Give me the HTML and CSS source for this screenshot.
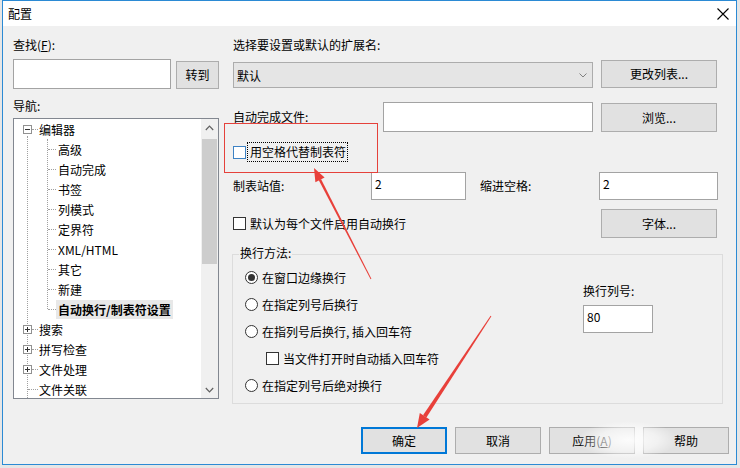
FILE: index.html
```html
<!DOCTYPE html>
<html lang="zh-CN">
<head>
<meta charset="utf-8">
<title>配置</title>
<link rel="stylesheet" href="styles.css">
</head>
<body>
<div class="window">
  <div class="titlebar">
    <span class="title">配置</span>
    <svg class="close" width="12" height="12" viewBox="0 0 12 12"><path d="M0.5 0.5 L11.5 11.5 M11.5 0.5 L0.5 11.5" stroke="#000" stroke-width="1.1" fill="none"/></svg>
  </div>
  <div class="main">
    <div class="left">
      <div class="label lbl-find">查找(<u>F</u>):</div>
      <div class="find-row">
        <div class="input find-input"></div>
        <div class="btn btn-go">转到</div>
      </div>
      <div class="label lbl-nav">导航:</div>
      <div class="tree">
        <div class="tree-list">
          <div class="tree-row root"><span class="tg minus"></span><span class="dash"></span><span class="txt">编辑器</span></div>
          <div class="children">
            <div class="tree-row leaf"><span class="txt">高级</span></div>
            <div class="tree-row leaf"><span class="txt">自动完成</span></div>
            <div class="tree-row leaf"><span class="txt">书签</span></div>
            <div class="tree-row leaf"><span class="txt">列模式</span></div>
            <div class="tree-row leaf"><span class="txt">定界符</span></div>
            <div class="tree-row leaf"><span class="txt">XML/HTML</span></div>
            <div class="tree-row leaf"><span class="txt">其它</span></div>
            <div class="tree-row leaf"><span class="txt">新建</span></div>
            <div class="tree-row leaf sel"><span class="txt">自动换行/制表符设置</span></div>
          </div>
          <div class="tree-row root"><span class="tg plus"></span><span class="dash"></span><span class="txt">搜索</span></div>
          <div class="tree-row root"><span class="tg plus"></span><span class="dash"></span><span class="txt">拼写检查</span></div>
          <div class="tree-row root"><span class="tg plus"></span><span class="dash"></span><span class="txt">文件处理</span></div>
          <div class="tree-row root noexp"><span class="dash long"></span><span class="txt">文件关联</span></div>
        </div>
        <div class="scrollbar">
          <div class="sb-btn"><svg width="9" height="6" viewBox="0 0 9 6"><polyline points="0.8,5 4.5,1.2 8.2,5" fill="none" stroke="#606060" stroke-width="1.2"/></svg></div>
          <div class="sb-track"><div class="sb-thumb"></div></div>
          <div class="sb-btn"><svg width="9" height="6" viewBox="0 0 9 6"><polyline points="0.8,1 4.5,4.8 8.2,1" fill="none" stroke="#606060" stroke-width="1.2"/></svg></div>
        </div>
      </div>
    </div>

    <div class="right">
      <div class="label lbl-ext">选择要设置或默认的扩展名:</div>
      <div class="row-ext">
        <div class="select"><span>默认</span><svg width="8" height="5" viewBox="0 0 8 5"><polyline points="0.5,0.5 4,4 7.5,0.5" fill="none" stroke="#808080" stroke-width="1"/></svg></div>
        <div class="btn btn-wide">更改列表...</div>
      </div>
      <div class="row-auto">
        <div class="label">自动完成文件:</div>
        <div class="input auto-input"></div>
        <div class="btn btn-browse">浏览...</div>
      </div>
      <div class="row-tabcb">
        <span class="cb cb-focus"></span>
        <span class="focus-label">用空格代替制表符</span>
      </div>
      <div class="row-tabs">
        <div class="label">制表站值:</div>
        <div class="input num-input">2</div>
        <div></div>
        <div class="label">缩进空格:</div>
        <div class="input num-input">2</div>
      </div>
      <div class="row-wrapcb">
        <div class="cb-line"><span class="cb"></span><span class="cb-text">默认为每个文件启用自动换行</span></div>
        <div class="btn btn-font">字体...</div>
      </div>
      <div class="group">
        <span class="legend">换行方法:</span>
        <div class="radios">
          <div class="opt"><span class="radio checked"></span><span>在窗口边缘换行</span></div>
          <div class="opt"><span class="radio"></span><span>在指定列号后换行</span></div>
          <div class="opt"><span class="radio"></span><span>在指列号后换行, 插入回车符</span></div>
          <div class="opt sub"><span class="cb"></span><span>当文件打开时自动插入回车符</span></div>
          <div class="opt"><span class="radio"></span><span>在指定列号后绝对换行</span></div>
        </div>
        <div class="col-num">
          <div class="label">换行列号:</div>
          <div class="input col-input">80</div>
        </div>
      </div>
    </div>
  </div>
  <div class="footer">
    <div class="btn btn-foot btn-default">确定</div>
    <div class="btn btn-foot">取消</div>
    <div class="btn btn-foot">应用(<u>A</u>)</div>
    <div class="btn btn-foot">帮助</div>
  </div>
</div>

<div class="redbox"></div>
<svg class="annotations" width="740" height="468" viewBox="0 0 740 468">
  <defs>
    <radialGradient id="wash" cx="50%" cy="50%" r="50%">
      <stop offset="0%" stop-color="#ffffff" stop-opacity="0.9"/>
      <stop offset="60%" stop-color="#ffffff" stop-opacity="0.55"/>
      <stop offset="100%" stop-color="#ffffff" stop-opacity="0"/>
    </radialGradient>
  </defs>
  <ellipse cx="628" cy="440" rx="50" ry="19" fill="url(#wash)"/>
  <polygon fill="#e8403a" points="371.4,278.8 370.6,279.2 318.8,180.2 321.0,179.0"/>
  <polygon fill="#e8403a" points="314,168 324.6,177.4 315.4,182.2"/>
  <polygon fill="#e8403a" points="491.4,316.2 490.6,315.8 423.0,415.3 426.4,417.4"/>
  <polygon fill="#e8403a" points="417,428 429.6,419.4 419.8,413.0"/>
</svg>
</body>
</html>
```
FILE: styles.css
```css
* { box-sizing: border-box; }
html, body { margin: 0; padding: 0; }
body {
  width: 740px;
  height: 468px;
  position: relative;
  overflow: hidden;
  background: #e6e6e6;
  font-family: "Noto Sans CJK SC", "Microsoft YaHei", "Noto Sans", sans-serif;
  font-size: 12px;
  color: #000;
}
u { text-decoration: underline; text-underline-offset: 1px; }

.window {
  margin-left: 2px;
  width: 735px;
  height: 465px;
  border: 1px solid #2b8ad4;
  background: #f0f0f0;
  display: flex;
  flex-direction: column;
}

.titlebar {
  height: 25px;
  flex: none;
  background: #fff;
  display: flex;
  align-items: center;
  justify-content: space-between;
  padding: 0 7px 0 5px;
}
.title { font-size: 12px; line-height: 16px; }
.close { display: block; }

.main {
  display: grid;
  grid-template-columns: 206px 485px;
  column-gap: 14px;
  padding-left: 10px;
}

.label { line-height: 16px; white-space: nowrap; }

.input {
  background: #fff;
  border: 1px solid #a3a3a3;
  line-height: 16px;
  padding: 3px 3px 0;
}

.btn {
  background: #e1e1e1;
  border: 1px solid #adadad;
  display: flex;
  align-items: center;
  justify-content: center;
  line-height: 16px;
  white-space: nowrap;
}

/* left column */
.lbl-find { margin-top: 11px; }
.find-row {
  margin-top: 6px;
  display: flex;
  align-items: flex-end;
  justify-content: space-between;
}
.find-input { width: 158px; height: 30px; }
.btn-go { width: 43px; height: 28px; }
.lbl-nav { margin-top: 9px; }

.tree {
  margin-top: 4px;
  height: 281px;
  border: 1px solid #828790;
  background: #fff;
  display: flex;
}
.tree-list {
  flex: 1;
  position: relative;
  overflow: hidden;
  padding-top: 0;
}
.tree-list::before {
  content: "";
  position: absolute;
  left: 13px;
  top: 17px;
  bottom: 0;
  border-left: 1px dotted #a0a0a0;
}
.tree-row {
  height: 20px;
  display: flex;
  align-items: center;
  white-space: nowrap;
  position: relative;
}
.root { padding-left: 9px; }
.root.noexp { padding-left: 14px; }
.tg {
  width: 9px;
  height: 9px;
  border: 1px solid #919191;
  background: #fff;
  position: relative;
  z-index: 1;
  flex: none;
}
.tg::before {
  content: "";
  position: absolute;
  left: 1px;
  width: 5px;
  top: 3px;
  height: 1px;
  background: #333;
}
.tg.plus::after {
  content: "";
  position: absolute;
  left: 3px;
  width: 1px;
  top: 1px;
  height: 5px;
  background: #333;
}
.dash {
  width: 6px;
  height: 1px;
  border-top: 1px dotted #a0a0a0;
  flex: none;
}
.dash.long { width: 10px; }
.root .txt { margin-left: 1px; }
.children { position: relative; }
.children::before {
  content: "";
  position: absolute;
  left: 33px;
  top: 0;
  bottom: 10px;
  border-left: 1px dotted #a0a0a0;
}
.leaf { padding-left: 44px; }
.leaf::before {
  content: "";
  position: absolute;
  left: 34px;
  top: 10px;
  width: 8px;
  border-top: 1px dotted #a0a0a0;
}
.leaf.sel .txt {
  font-weight: bold;
  background: #e8e8e8;
  padding: 1px 2px;
  margin-left: -2px;
}

.scrollbar {
  width: 17px;
  flex: none;
  background: #f0f0f0;
  display: flex;
  flex-direction: column;
}
.sb-btn {
  height: 17px;
  display: flex;
  align-items: center;
  justify-content: center;
  flex: none;
}
.sb-btn svg { display: block; }
.sb-track { flex: 1; }
.sb-thumb {
  margin: 3px 1px 0;
  height: 125px;
  background: #cdcdcd;
}

/* right column */
.lbl-ext { margin-top: 11px; }
.row-ext {
  margin-top: 7px;
  display: grid;
  grid-template-columns: 360px 116px;
  column-gap: 8px;
  align-items: end;
}
.select {
  height: 26px;
  background: #e5e5e5;
  border: 1px solid #acacac;
  display: flex;
  align-items: center;
  justify-content: space-between;
  padding: 0 3px 0 3px;
}
.select svg { display: block; margin-right: 2px; }
.btn-wide { height: 28px; }

.row-auto {
  margin-top: 14px;
  display: grid;
  grid-template-columns: 150px 210px 8px 116px;
  align-items: end;
}
.row-auto .label { align-self: center; }
.auto-input { height: 30px; }
.btn-browse { grid-column: 4; height: 29px; }

.row-tabcb {
  margin-top: 10px;
  height: 20px;
  display: flex;
  align-items: center;
}
.cb {
  width: 13px;
  height: 13px;
  border: 1px solid #333;
  background: #fff;
  flex: none;
  display: inline-block;
}
.cb-focus { border-color: #3d82c4; }
.focus-label {
  margin-left: 2px;
  outline: 1px dotted #000;
  padding: 1px 1px 1px 2px;
  line-height: 16px;
}

.row-tabs {
  margin-top: 10px;
  display: grid;
  grid-template-columns: 138px 95px 14px 119px 119px;
  align-items: center;
}
.num-input { height: 28px; }

.row-wrapcb {
  margin-top: 9px;
  height: 29px;
  display: flex;
  align-items: center;
  justify-content: space-between;
}
.cb-line { display: flex; align-items: center; }
.cb-text { margin-left: 4px; line-height: 16px; }
.btn-font { width: 116px; height: 29px; margin-right: 1px; }

.group {
  margin-top: 16px;
  margin-left: -1px;
  width: 491px;
  height: 150px;
  border: 1px solid #dcdcdc;
  position: relative;
  display: grid;
  grid-template-columns: 338px auto;
  padding: 9px 0 0 12px;
}
.legend {
  position: absolute;
  top: -10px;
  left: 6px;
  padding: 0 1px;
  background: #f0f0f0;
  line-height: 16px;
}
.opt {
  height: 27px;
  display: flex;
  align-items: center;
  gap: 4px;
  white-space: nowrap;
}
.opt.sub { padding-left: 21px; }
.radio {
  width: 13px;
  height: 13px;
  border: 1px solid #333;
  border-radius: 50%;
  background: #fff;
  flex: none;
  display: flex;
  align-items: center;
  justify-content: center;
}
.radio.checked::after {
  content: "";
  width: 7px;
  height: 7px;
  border-radius: 50%;
  background: #333;
}
.col-num .label { margin-top: 19px; }
.col-input { margin-top: 6px; width: 70px; height: 28px; }

.footer {
  margin-top: auto;
  display: flex;
  justify-content: flex-end;
  gap: 8px;
  padding: 0 7px 10px 0;
}
.btn-foot { width: 86px; height: 27px; }
.btn-default { border: 2px solid #0078d7; }

/* annotations lying over the dialog */
.redbox {
  position: absolute;
  left: 224px;
  top: 123px;
  width: 154px;
  height: 50px;
  border: 1px solid #e5413b;
}
.annotations {
  position: absolute;
  left: 0;
  top: 0;
  pointer-events: none;
}
```
